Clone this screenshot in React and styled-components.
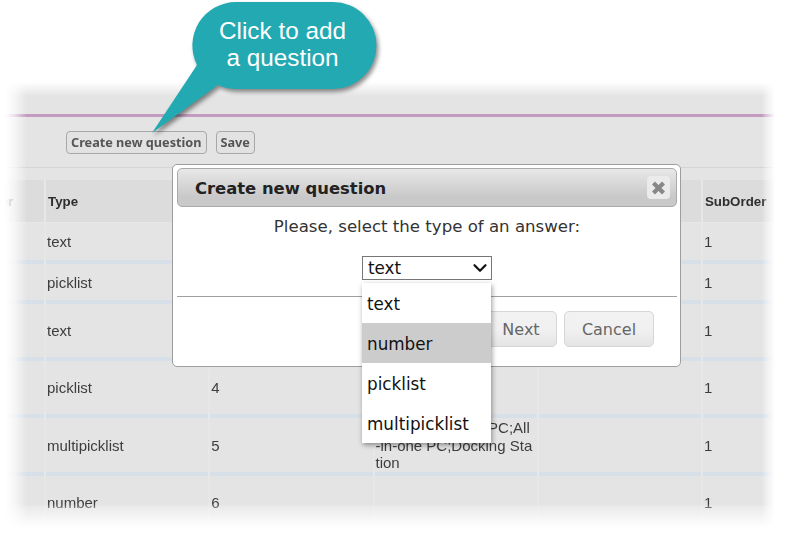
import styled, { createGlobalStyle } from "styled-components";
import { ChevronDown } from "lucide-react";

const GlobalStyle = createGlobalStyle`
    html, body {
        margin: 0;
        padding: 0;
        background: #ffffff;
    }
`;

const Page = styled.div`
    position: relative;
    width: 790px;
    height: 534px;
    overflow: hidden;
    padding-top: 80px;
    box-sizing: border-box;
    font-family: "Liberation Sans", Arial, sans-serif;
`;

const Screen = styled.div`
    width: 778px;
    height: 454px;
    overflow: hidden;
    background: #e4e4e4;
    mask-image: linear-gradient(to right, transparent 5px, rgba(0, 0, 0, 0.35) 15px, #000 27px, #000 762px, rgba(0, 0, 0, 0.7) 765px, transparent 775px),
        linear-gradient(to bottom, transparent 2px, #000 16px, #000 424px, rgba(0, 0, 0, 0.75) 427px, transparent 448px);
    mask-composite: intersect;
`;

const TopStrip = styled.div`
    height: 34px;
    border-bottom: 3px solid #c39bc0;
`;

const Toolbar = styled.div`
    display: flex;
    align-items: center;
    gap: 9px;
    height: 50px;
    padding-left: 66px;
    border-bottom: 1px solid #d4d4d4;
`;

const ToolButton = styled.button`
    height: 23px;
    padding: 0 4px;
    border: 1px solid #a8a8a8;
    border-radius: 4px;
    background: #e2e2e2;
    color: #555555;
    font-family: "Noto Sans", Tahoma, sans-serif;
    font-size: 12.7px;
    font-weight: 700;
`;

const TableArea = styled.div`
    padding-top: 12px;
`;

const Table = styled.table`
    table-layout: fixed;
    width: 894.25px;
    margin-left: -27px;
    border-collapse: separate;
    border-spacing: 2px 0;
    background: #e7e7e7;
    color: #3d3d3d;
    font-size: 15px;
`;

const HeadCell = styled.th`
    width: ${(p) => p.$width || 162.25}px;
    height: 43px;
    padding: 0 2px;
    border-bottom: 1px solid #e7e7e7;
    background: #dcdcdc;
    box-sizing: border-box;
    color: #2e2e2e;
    font-size: 13.3px;
    text-align: left;
`;

const Cell = styled.td`
    height: ${(p) => p.$height}px;
    padding: 1px 2px 0 1px;
    border-bottom: 4px solid #d7dfe8;
    background: #e4e4e4;
    box-sizing: border-box;
    line-height: 17.5px;
`;

const Callout = styled.div`
    position: absolute;
    left: 191px;
    top: 2px;
    z-index: 1;
    width: 186px;
    height: 88px;
    box-sizing: border-box;
    padding: 15px 3px 0 0;
    color: #ffffff;
    font-size: 24.3px;
    line-height: 27px;
    text-align: center;
`;

const CalloutShape = styled.svg`
    position: absolute;
    left: -45px;
    top: -2px;
    z-index: -1;
    overflow: visible;
    filter: drop-shadow(2px 3px 2px rgba(0, 0, 0, 0.45));
`;

const Modal = styled.div`
    position: absolute;
    left: 172px;
    top: 164px;
    width: 509px;
    height: 203px;
    box-sizing: border-box;
    display: flex;
    flex-direction: column;
    padding: 3px 3px 3px 4px;
    border: 1px solid #9e9e9e;
    border-radius: 5px;
    background: #ffffff;
    font-family: "DejaVu Sans", Verdana, sans-serif;
`;

const ModalTitle = styled.div`
    display: flex;
    align-items: center;
    justify-content: space-between;
    height: 39px;
    box-sizing: border-box;
    padding: 1px 6px 0 17px;
    border: 1px solid #aaaaaa;
    border-radius: 5px;
    background: linear-gradient(#e8e8e8, #c9c9c9 75%);
    color: #222222;
    font-size: 16.4px;
    font-weight: 700;
`;

const CloseButton = styled.div`
    display: flex;
    align-items: center;
    justify-content: center;
    width: 23px;
    height: 23px;
    margin-top: -1px;
    border-radius: 4px;
    background: #ebebeb;
`;

const Prompt = styled.div`
    margin-top: 11px;
    color: #333333;
    font-size: 16.6px;
    line-height: 18px;
    text-align: center;
`;

const SelectRow = styled.div`
    position: relative;
    align-self: flex-start;
    margin: 20px 0 0 185px;
`;

const AnswerSelect = styled.select`
    display: block;
    width: 130px;
    height: 24px;
    padding: 0 5px;
    border: 1px solid #767676;
    border-radius: 0;
    background: #ffffff;
    color: #111111;
    font-family: inherit;
    font-size: 16.8px;
    appearance: none;
`;

const SelectArrow = styled.span`
    position: absolute;
    right: 1px;
    top: 1px;
    display: flex;
    color: #111111;
    pointer-events: none;
`;

const Divider = styled.hr`
    width: 100%;
    height: 1px;
    margin: 16px 0 0;
    border: 0;
    background: #a0a0a0;
`;

const ModalFooter = styled.div`
    display: flex;
    justify-content: flex-end;
    gap: 7px;
    margin-top: 14px;
    padding-right: 23px;
`;

const FooterButton = styled.button`
    width: ${(p) => p.$width}px;
    height: 36px;
    padding: 0;
    border: 1px solid #d6d6d6;
    border-radius: 5px;
    background: linear-gradient(#f2f2f2, #f0f0f0 55%, #e4e4e4);
    color: #666666;
    font-family: inherit;
    font-size: 16px;
`;

const OptionList = styled.ul`
    position: absolute;
    left: 362px;
    top: 283px;
    width: 129px;
    margin: 0;
    padding: 0;
    list-style: none;
    background: #ffffff;
    box-shadow: 1px 2px 5px rgba(0, 0, 0, 0.4);
    font-family: "DejaVu Sans", Verdana, sans-serif;
`;

const OptionItem = styled.li`
    height: 40px;
    padding-left: 5px;
    background: ${(p) => (p.$active ? "#cccccc" : "transparent")};
    color: #111111;
    font-size: 16.8px;
    line-height: 43px;
`;

const columns = [
    { title: "Order", width: 69 },
    { title: "Type" },
    { title: "Number" },
    { title: "Values" },
    { title: "Parent" },
    { title: "SubOrder" },
];

const rows = [
    { height: 41, cells: ["1", "text", "1", "", "", "1"] },
    { height: 40, cells: ["2", "picklist", "2", "", "", "1"] },
    { height: 57, cells: ["3", "text", "3", "", "", "1"] },
    { height: 57, cells: ["4", "picklist", "4", "", "", "1"] },
    {
        height: 57,
        cells: [
            "5",
            "multipicklist",
            "5",
            <>
                Notebook;Tablet PC;All
                <br />
                -in-one PC;Docking Sta
                <br />
                tion
            </>,
            "",
            "1",
        ],
    },
    { height: 57, cells: ["6", "number", "6", "", "", "1"] },
];

const options = ["text", "number", "picklist", "multipicklist"];

export default function App() {
    return (
        <Page>
            <GlobalStyle />
            <Screen>
                <TopStrip />
                <Toolbar>
                    <ToolButton>Create new question</ToolButton>
                    <ToolButton>Save</ToolButton>
                </Toolbar>
                <TableArea>
                    <Table>
                        <thead>
                            <tr>
                                {columns.map((col) => (
                                    <HeadCell key={col.title} $width={col.width}>
                                        {col.title}
                                    </HeadCell>
                                ))}
                            </tr>
                        </thead>
                        <tbody>
                            {rows.map((row, i) => (
                                <tr key={i}>
                                    {row.cells.map((cell, j) => (
                                        <Cell key={j} $height={row.height}>
                                            {cell}
                                        </Cell>
                                    ))}
                                </tr>
                            ))}
                        </tbody>
                    </Table>
                </TableArea>
            </Screen>

            <Modal>
                <ModalTitle>
                    Create new question
                    <CloseButton>
                        <svg width="15" height="14" viewBox="0 0 15 14">
                            <path d="M2.5 2 L12.5 12 M12.5 2 L2.5 12" stroke="#888888" strokeWidth="4.2" />
                        </svg>
                    </CloseButton>
                </ModalTitle>
                <Prompt>Please, select the type of an answer:</Prompt>
                <SelectRow>
                    <AnswerSelect defaultValue="text">
                        {options.map((o) => (
                            <option key={o}>{o}</option>
                        ))}
                    </AnswerSelect>
                    <SelectArrow>
                        <ChevronDown size={22} strokeWidth={2.4} />
                    </SelectArrow>
                </SelectRow>
                <Divider />
                <ModalFooter>
                    <FooterButton $width={72}>Next</FooterButton>
                    <FooterButton $width={90}>Cancel</FooterButton>
                </ModalFooter>
            </Modal>
            <OptionList>
                {options.map((o) => (
                    <OptionItem key={o} $active={o === "number"}>
                        {o}
                    </OptionItem>
                ))}
            </OptionList>

            <Callout>
                <CalloutShape width="232" height="136" viewBox="0 0 232 136">
                    <path
                        d="M90 2 H187 A43.5 43.5 0 0 1 187 89 H90 A43.5 43.5 0 0 1 72 85 L6 133 L51 65 A43.5 43.5 0 0 1 90 2 Z"
                        fill="#22a9b2"
                    />
                </CalloutShape>
                Click to add
                <br />a question
            </Callout>
        </Page>
    );
}
